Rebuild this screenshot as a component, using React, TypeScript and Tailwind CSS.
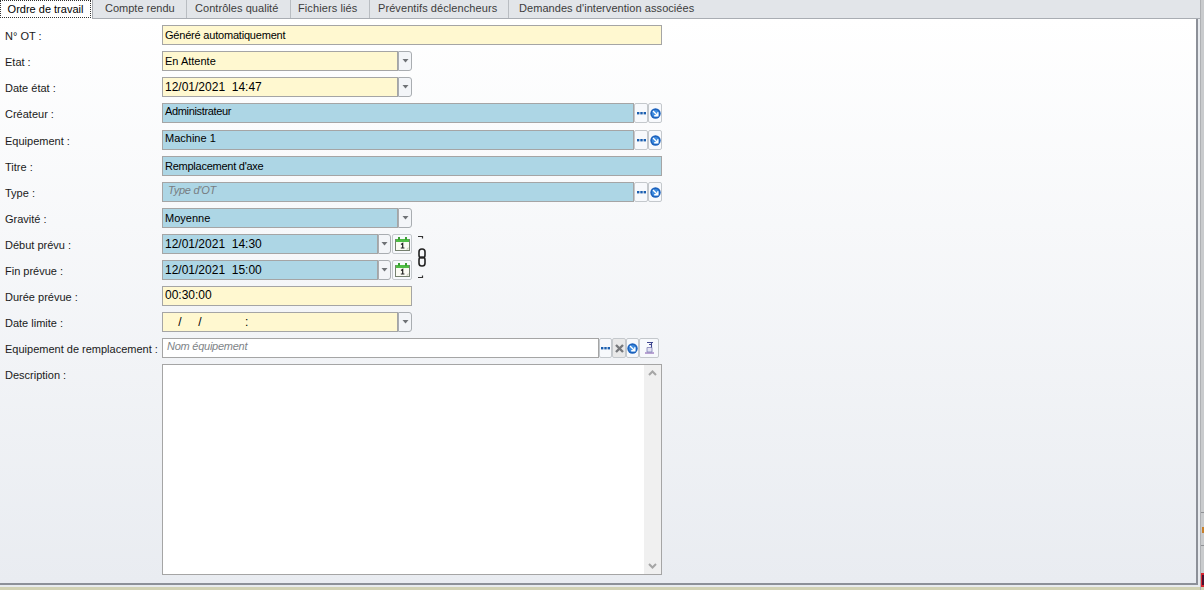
import React from "react"

const yellow = "bg-[#fff8d0]"
const blue = "bg-[#add6e5]"

const tabs = [
  { label: "Compte rendu", w: "w-[94px] pl-[12px] border-r" },
  { label: "Contrôles qualité", w: "w-[104px] pl-[8px] border-r tracking-[0.05px]" },
  { label: "Fichiers liés", w: "w-[79px] pl-[7px] border-r tracking-[0.1px]" },
  { label: "Préventifs déclencheurs", w: "w-[139px] pl-[8px] border-r tracking-[0.08px]" },
  { label: "Demandes d'intervention associées", w: "w-[204px] pl-[10px] tracking-[0.06px]" },
]

const SmallButton = ({ children, w = "w-[14px]", bg = "bg-[#f7f9fc]" }: { children: React.ReactNode; w?: string; bg?: string }) => (
  <div className={`${w} ${bg} h-[20px] shrink-0 flex items-center justify-center border border-[#c4c8cc] rounded-[2px]`}>
    {children}
  </div>
)

const Dots = () => (
  <svg width="9" height="3" viewBox="0 0 9 3">
    <rect x="0" y="0" width="2.4" height="2.4" fill="#1b5fb0" />
    <rect x="3.3" y="0" width="2.4" height="2.4" fill="#1b5fb0" />
    <rect x="6.6" y="0" width="2.4" height="2.4" fill="#1b5fb0" />
  </svg>
)

const GoIcon = () => (
  <svg width="11" height="11" viewBox="0 0 11 11">
    <circle cx="5.5" cy="5.5" r="5.2" fill="#1c62bd" />
    <circle cx="5.5" cy="5.5" r="3.6" fill="#3f8de0" />
    <path d="M3 3 L7.5 7.5 M7.8 4.2 V7.8 H4.2" stroke="#fff" strokeWidth="1.4" fill="none" />
  </svg>
)

const CrossIcon = () => (
  <svg width="9" height="9" viewBox="0 0 9 9">
    <path d="M1 1 L8 8 M8 1 L1 8" stroke="#77797c" strokeWidth="2.4" />
  </svg>
)

const DocIcon = () => (
  <svg width="11" height="14" viewBox="0 0 11 14">
    <path d="M1 11 H10 V13 H1 Z" fill="#b9a3d3" />
    <path d="M3 6.5 H8 V11 H3 Z" fill="#e2e2f3" stroke="#7f80b5" strokeWidth="0.8" />
    <path d="M3 1.5 H9 M7.5 1.5 V6.5 M5 3.5 H7.5" stroke="#3f4690" strokeWidth="1.1" fill="none" />
  </svg>
)

const Caret = () => (
  <svg width="7" height="4" viewBox="0 0 7 4">
    <path d="M0.5 0 H6.5 L3.5 3.5 Z" fill="#6f7276" />
  </svg>
)

const CalendarIcon = () => (
  <svg width="15" height="14" viewBox="0 0 15 14">
    <rect x="0.5" y="2.5" width="14" height="11" fill="#fbfbf3" stroke="#75806e" />
    <rect x="1" y="2" width="13" height="3" fill="#4fbd45" />
    <rect x="3" y="0" width="2" height="3" fill="#3c9f35" />
    <rect x="10" y="0" width="2" height="3" fill="#3c9f35" />
    <path d="M6 7.4 L7.7 6.4 V11 M5.8 11 H9.4" stroke="#222" strokeWidth="1.2" fill="none" />
    <path d="M11 12.5 L13.5 10 V12.5 Z" fill="#c9c9bb" />
  </svg>
)

const Label = ({ children }: { children: React.ReactNode }) => (
  <div className="w-[162px] shrink-0 pl-[5px] text-[11px] leading-[22px] text-[#1a1a1a] whitespace-nowrap">{children}</div>
)

const Box = ({
  color,
  w,
  children,
  textClass = "text-[11px] leading-[19px] text-black",
}: {
  color: string
  w: string
  children?: React.ReactNode
  textClass?: string
}) => (
  <div className={`${color} ${w} h-[20px] shrink-0 border border-[#a5a5a5] px-[2px] whitespace-pre overflow-hidden ${textClass}`}>
    {children}
  </div>
)

const ComboBtn = ({ w = "w-[14px]" }: { w?: string }) => (
  <div className={`${w} h-[20px] shrink-0 bg-[#f3f5f8] border border-[#a9adb1] rounded-r-[3px] flex items-center justify-center`}>
    <Caret />
  </div>
)

const Row = ({ label, children, className = "" }: { label: string; children: React.ReactNode; className?: string }) => (
  <div className={`flex h-[20px] ${className}`}>
    <Label>{label}</Label>
    <div className="flex">{children}</div>
  </div>
)

const dateText = "text-[12px] leading-[19px] text-black"
const lookupText = "text-[11px] leading-[15px] text-black tracking-[-0.35px]"
const hintText = "text-[11px] leading-[15px] italic text-[#777d82] tracking-[-0.25px] pl-[5px]"

const App = () => {
  return (
    <div className="w-[1204px] h-[590px] overflow-hidden flex bg-[#e8ebef] font-['Liberation_Sans',sans-serif]">
      <div className="w-[1200px] h-[590px] flex flex-col">
        {/* onglets */}
        <div className="flex h-[19px] shrink-0 bg-[#e2e5e9] border-b border-[#a9adb3] text-[11px] leading-[17px] text-[#3c3c3c] whitespace-nowrap">
          <div className="w-[93px] h-[19px] bg-white border-r border-[#a9adb3] text-black">
            <div className="w-[91px] h-[18px] border border-dotted border-[#333] text-center leading-[17px]">Ordre de travail</div>
          </div>
          {tabs.map((t) => (
            <div key={t.label} className={`${t.w} h-[18px] border-[#b9bdc2]`}>
              {t.label}
            </div>
          ))}
        </div>

        {/* formulaire */}
        <div className="w-[1198px] h-[566px] shrink-0 flex flex-col gap-[6px] pt-[6px] bg-gradient-to-b from-white to-[#e9ecf1] border-r-2 border-b-2 border-[#8c9098]">
          <Row label="N° OT :">
            <Box color={yellow} w="w-[500px]" textClass="text-[11px] leading-[19px] text-black tracking-[-0.2px]">Généré automatiquement</Box>
          </Row>
          <Row label="Etat :">
            <Box color={yellow} w="w-[236px]">En Attente</Box>
            <ComboBtn />
          </Row>
          <Row label="Date état :">
            <Box color={yellow} w="w-[236px]" textClass={dateText}>12/01/2021  14:47</Box>
            <ComboBtn />
          </Row>
          <Row label="Créateur :">
            <Box color={blue} w="w-[472px]" textClass={lookupText}>Administrateur</Box>
            <SmallButton><Dots /></SmallButton>
            <SmallButton><GoIcon /></SmallButton>
          </Row>
          <Row label="Equipement :" className="mt-[1px]">
            <Box color={blue} w="w-[472px]" textClass="text-[11px] leading-[15px] text-black">Machine 1</Box>
            <SmallButton><Dots /></SmallButton>
            <SmallButton><GoIcon /></SmallButton>
          </Row>
          <Row label="Titre :">
            <Box color={blue} w="w-[500px]" textClass="text-[11px] leading-[19px] text-black tracking-[-0.25px]">Remplacement d'axe</Box>
          </Row>
          <Row label="Type :">
            <Box color={blue} w="w-[472px]" textClass={hintText}>Type d'OT</Box>
            <SmallButton><Dots /></SmallButton>
            <SmallButton><GoIcon /></SmallButton>
          </Row>
          <Row label="Gravité :">
            <Box color={blue} w="w-[236px]">Moyenne</Box>
            <ComboBtn />
          </Row>
          <div className="relative">
            <Row label="Début prévu :">
              <Box color={blue} w="w-[216px]" textClass={dateText}>12/01/2021  14:30</Box>
              <ComboBtn w="w-[13px]" />
              <div className="ml-[1px]">
                <SmallButton w="w-[20px]"><CalendarIcon /></SmallButton>
              </div>
            </Row>
            {/* lien entre les deux dates */}
            <svg className="absolute left-[416px] top-[1px]" width="12" height="44" viewBox="0 0 12 44">
              <path d="M2 1.5 H6.5 V3.5 M2 42.5 H6.5 V40.5" stroke="#333" strokeWidth="1.2" fill="none" />
              <rect x="3" y="14" width="6" height="9" rx="2.8" stroke="#222" strokeWidth="1.6" fill="none" />
              <rect x="3" y="22" width="6" height="9" rx="2.8" stroke="#222" strokeWidth="1.6" fill="none" />
            </svg>
          </div>
          <Row label="Fin prévue :">
            <Box color={blue} w="w-[216px]" textClass={dateText}>12/01/2021  15:00</Box>
            <ComboBtn w="w-[13px]" />
            <div className="ml-[1px]">
              <SmallButton w="w-[20px]"><CalendarIcon /></SmallButton>
            </div>
          </Row>
          <Row label="Durée prévue :">
            <Box color={yellow} w="w-[250px]" textClass="text-[12px] leading-[17px] text-black">00:30:00</Box>
          </Row>
          <Row label="Date limite :">
            <Box color={yellow} w="w-[236px]" textClass={dateText}>{"    /     /             :"}</Box>
            <ComboBtn />
          </Row>
          <Row label="Equipement de remplacement :">
            <Box color="bg-white" w="w-[437px]" textClass="text-[11px] leading-[15px] italic text-[#808488] tracking-[-0.25px] pl-[4px]">Nom équipement</Box>
            <SmallButton w="w-[13px]"><Dots /></SmallButton>
            <SmallButton w="w-[14px]" bg="bg-[#e9e9e9]"><CrossIcon /></SmallButton>
            <SmallButton w="w-[13px]"><GoIcon /></SmallButton>
            <SmallButton w="w-[20px]"><DocIcon /></SmallButton>
          </Row>
          <div className="flex">
            <Label>Description :</Label>
            <div className="w-[500px] h-[211px] bg-white border border-[#a5a5a5] flex justify-end">
              <div className="w-[17px] h-full bg-[#f0f0f0] flex flex-col items-center justify-between py-[5px]">
                <svg width="9" height="6" viewBox="0 0 9 6">
                  <path d="M1 5 L4.5 1.5 L8 5" stroke="#a6a6a6" strokeWidth="2" fill="none" />
                </svg>
                <svg width="9" height="6" viewBox="0 0 9 6">
                  <path d="M1 1 L4.5 4.5 L8 1" stroke="#a6a6a6" strokeWidth="2" fill="none" />
                </svg>
              </div>
            </div>
          </div>
        </div>
        <div className="flex-1" />
        <div className="h-[3px] shrink-0 bg-[#d2d2b4]" />
      </div>

      {/* bord de la fenêtre voisine */}
      <div className="w-[4px] h-[590px] flex flex-col bg-[#c9cbcd] border-l border-[#aeb0b3]">
        <div className="h-[513px] shrink-0 border-b border-[#8f9194]" />
        <div className="h-[14px] shrink-0" />
        <div className="h-[6px] shrink-0 ml-[1px] bg-[#c8802a]" />
        <div className="h-[13px] shrink-0 border-b border-[#8f9194]" />
        <div className="h-[27px] shrink-0" />
        <div className="h-[14px] shrink-0 bg-[#d8242f] pl-[1px] py-[2px]">
          <div className="h-full bg-[#4a1030]" />
        </div>
        <div className="flex-1 bg-[#d2d2b4]" />
      </div>
    </div>
  )
}

export default App
